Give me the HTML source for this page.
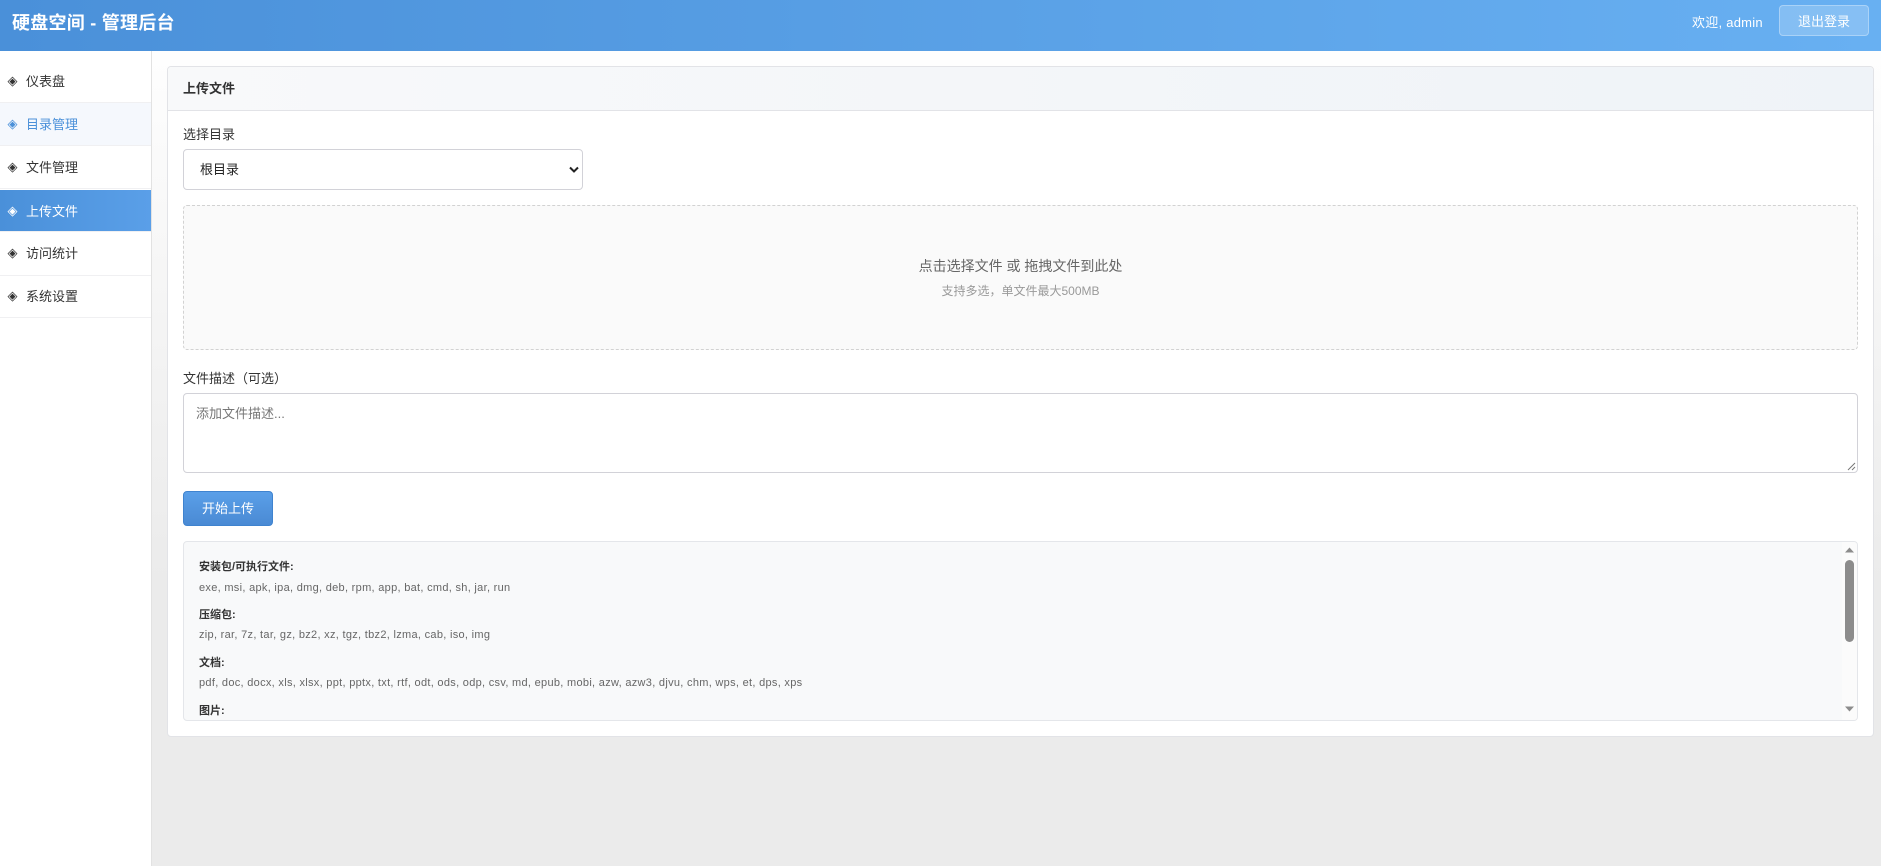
<!DOCTYPE html>
<html lang="zh-CN"><head><meta charset="utf-8"><title>硬盘空间 - 管理后台</title>
<style>
*{box-sizing:border-box;margin:0;padding:0}
html,body{width:1881px;height:866px;overflow:hidden}
body{position:relative;background:#ebebeb;font-family:"Liberation Sans","Noto Sans CJK SC",sans-serif;font-size:13px;color:#333}
.a{position:absolute;white-space:nowrap}
#hd{left:0;top:0;width:1881px;height:51px;background:linear-gradient(90deg,#4a90d9,#68b0f2)}
#side{left:0;top:51px;width:152px;height:815px;background:#fff;border-right:1px solid #e2e2e2}
.it{position:absolute;left:0;width:151px;height:43px;border-bottom:1px solid #f0f0f2;line-height:44px}
.it i{position:absolute;left:6px;top:0;font-style:normal;font-size:13px;width:13px;text-align:center;font-family:"DejaVu Sans",sans-serif}
.it span{position:absolute;left:26px;top:0}
#main{left:152px;top:51px;width:1729px;height:815px;background:linear-gradient(180deg,#fefefe,#ebebeb 65%)}
#card{left:167px;top:66px;width:1707px;height:671px;background:#fff;border:1px solid #e2e3e7;border-radius:4px}
#ch{left:0;top:0;width:1705px;height:44px;background:linear-gradient(90deg,#f8f9fa,#eff3f8);border-bottom:1px solid #e2e3e7;border-radius:4px 4px 0 0}
.h{left:15px;font-weight:bold;line-height:18px}
.l{left:15px;line-height:18px;color:#666;letter-spacing:.3px}
</style></head><body>
<div class="a" id="hd"></div>
<div class="a" style="left:12px;top:11px;font-size:18px;font-weight:bold;color:#fff;line-height:25px;letter-spacing:.25px">硬盘空间 - 管理后台</div>
<div class="a" style="left:1692px;top:13px;line-height:19px;color:#fff;letter-spacing:.25px">欢迎, admin</div>
<div class="a" style="left:1779px;top:5px;width:90px;height:31px;background:rgba(255,255,255,.2);border:1px solid rgba(255,255,255,.3);border-radius:4px;color:#fff;text-align:center;line-height:31px">退出登录</div>

<div class="a" id="main"></div>
<div class="a" id="side">
<div class="it" style="top:9px"><i>◈</i><span>仪表盘</span></div>
<div class="it" style="top:52px;background:#f5f8fd;color:#4a90d9"><i>◈</i><span>目录管理</span></div>
<div class="it" style="top:95px"><i>◈</i><span>文件管理</span></div>
<div class="it" style="top:139px;height:42px;background:linear-gradient(90deg,#4a90d9,#5a9fe8);color:#fff"><i>◈</i><span>上传文件</span></div>
<div class="it" style="top:181px;height:44px"><i>◈</i><span>访问统计</span></div>
<div class="it" style="top:224px"><i>◈</i><span>系统设置</span></div>
</div>

<div class="a" id="card"><div class="a" id="ch"></div></div>
<div class="a" style="left:183px;top:79px;font-weight:bold;line-height:19px">上传文件</div>
<div class="a" style="left:183px;top:125px;line-height:19px">选择目录</div>
<div class="a" style="left:183px;top:149px;width:400px;height:41px;border:1px solid #d2d2d8;border-radius:4px;background:#fff;color:#222;padding-left:16px;line-height:40px">根目录
<svg style="position:absolute;left:385px;top:16px" width="10" height="8" viewBox="0 0 10 8"><path d="M1 1.5L5 5.5L9 1.5" fill="none" stroke="#222" stroke-width="2"/></svg></div>
<div class="a" style="left:183px;top:205px;width:1675px;height:145px;border:1px dashed #d2d2d2;border-radius:4px;background:#fafafa"></div>
<div class="a" style="left:183px;top:256px;width:1675px;text-align:center;font-size:14px;line-height:20px;color:#666">点击选择文件 或 拖拽文件到此处</div>
<div class="a" style="left:183px;top:283px;width:1675px;text-align:center;font-size:12px;line-height:17px;color:#999">支持多选，单文件最大500MB</div>
<div class="a" style="left:183px;top:369px;line-height:19px">文件描述（可选）</div>
<div class="a" style="left:183px;top:393px;width:1675px;height:80px;border:1px solid #d2d2d8;border-radius:4px;background:#fff;color:#777;padding:10px 12px;line-height:19px">添加文件描述...
<svg style="position:absolute;right:1px;bottom:1px" width="9" height="9" viewBox="0 0 9 9"><path d="M1 8L8 1M5 8L8 5" stroke="#777" stroke-width="1" fill="none"/></svg></div>
<div class="a" style="left:183px;top:491px;width:90px;height:35px;border:1px solid #3f83cf;border-radius:4px;background:linear-gradient(180deg,#5a9fe8,#4a8ad4);color:#fff;text-align:center;line-height:33px">开始上传</div>

<div class="a" style="left:183px;top:541px;width:1675px;height:180px;border:1px solid #e4e6ea;border-radius:4px;background:#f8f9fa;overflow:hidden;font-size:11px">
<div class="a h" style="top:16px">安装包/可执行文件:</div>
<div class="a l" style="top:37px">exe, msi, apk, ipa, dmg, deb, rpm, app, bat, cmd, sh, jar, run</div>
<div class="a h" style="top:64px">压缩包:</div>
<div class="a l" style="top:84px">zip, rar, 7z, tar, gz, bz2, xz, tgz, tbz2, lzma, cab, iso, img</div>
<div class="a h" style="top:112px">文档:</div>
<div class="a l" style="top:132px">pdf, doc, docx, xls, xlsx, ppt, pptx, txt, rtf, odt, ods, odp, csv, md, epub, mobi, azw, azw3, djvu, chm, wps, et, dps, xps</div>
<div class="a h" style="top:160px">图片:</div>
<div class="a" style="left:1658px;top:0;width:15px;height:178px;background:#fbfbfb"></div>
<div class="a" style="left:1661px;top:18px;width:9px;height:82px;background:#8c8c8c;border-radius:5px"></div>
<svg class="a" style="left:1661px;top:5px" width="9" height="6" viewBox="0 0 9 6"><path d="M4.5 0.5L9 5.5H0Z" fill="#8c8c8c"/></svg>
<svg class="a" style="left:1661px;top:164px" width="9" height="6" viewBox="0 0 9 6"><path d="M4.5 5.5L9 0.5H0Z" fill="#8c8c8c"/></svg>
</div>
</body></html>
